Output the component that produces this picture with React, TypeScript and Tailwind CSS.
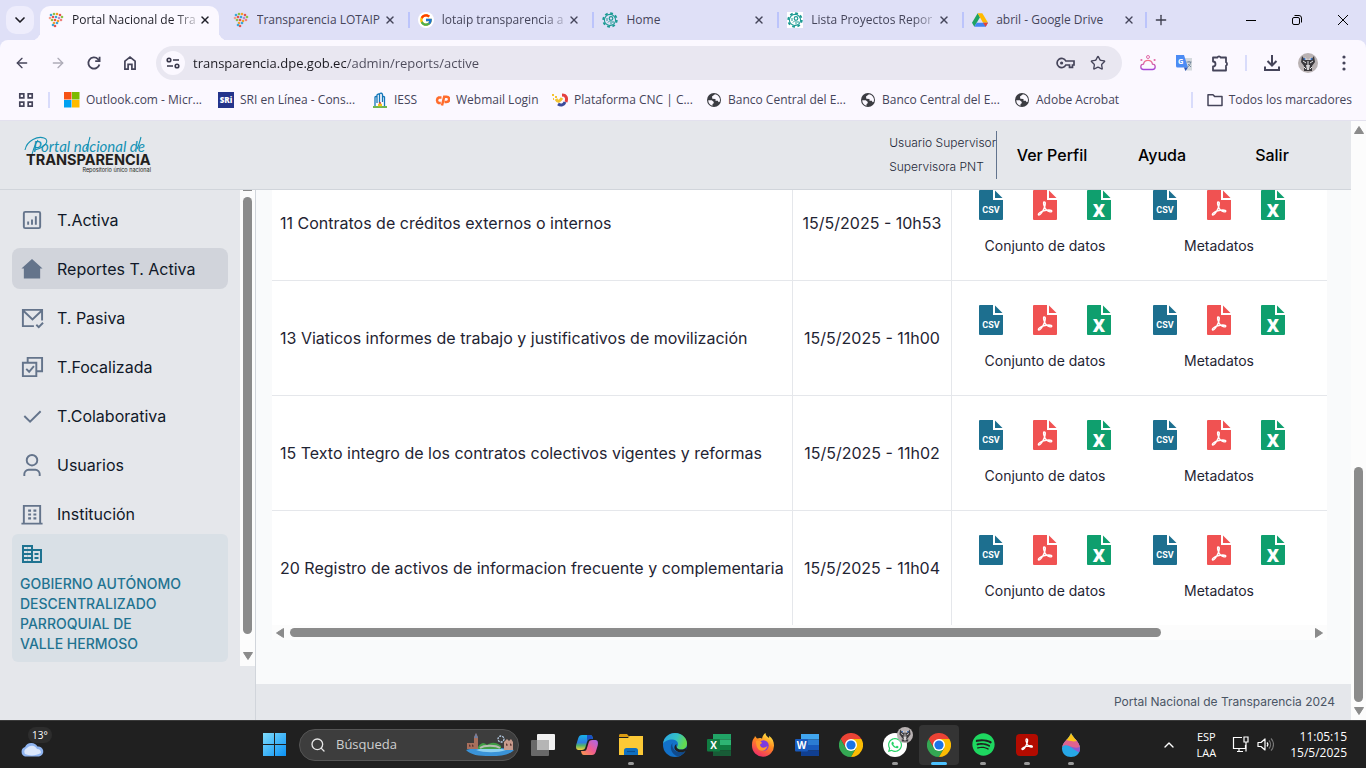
import type { ReactNode } from "react";
import { FcGoogle } from "react-icons/fc";
import { FaSpotify, FaWhatsapp } from "react-icons/fa";
import { ArrowLeft, ArrowRight, ChevronDown, ChevronUp, Plus, Search, Star, X } from "lucide-react";

/* ---------- Favicons ---------- */

const dots = [
  [3, 3, "#3ba7d8"], [6, 2, "#8bc34a"], [9, 2, "#f4a12c"], [12, 3, "#e5524f"],
  [2, 6, "#f2a08c"], [5, 5, "#e5524f"], [8, 5, "#3ba7d8"], [11, 6, "#b58bd0"], [14, 5, "#8bc34a"],
  [4, 8, "#8bc34a"], [7, 8, "#e5524f"], [10, 9, "#f4a12c"], [13, 8, "#ef7f7c"],
  [6, 11, "#f4a12c"], [9, 11, "#3ba7d8"], [7, 14, "#e5524f"], [5, 13, "#3ba7d8"],
] as const;

function MapIcon() {
  return (
    <svg viewBox="0 0 16 16" className="size-4">
      {dots.map(([x, y, fill]) => (
        <circle key={`${x}-${y}`} cx={x} cy={y} r="1.3" fill={fill} />
      ))}
    </svg>
  );
}

function GoogleIcon() {
  return (
    <span className="flex size-4 items-center justify-center rounded-full bg-white">
      <FcGoogle className="size-3.5" />
    </span>
  );
}

function GearIcon({ boxed }: { boxed?: boolean }) {
  return (
    <svg viewBox="0 0 16 16" className={boxed ? "size-4 bg-white" : "size-4"} fill="none" stroke="#1d9a94">
      <circle cx="8" cy="8" r="6.8" strokeWidth="1.8" strokeDasharray="2.8 2.54" />
      <circle cx="8" cy="8" r="5.6" strokeWidth="1.1" />
      <circle cx="9" cy="6.4" r="1.8" strokeWidth="1.2" />
      <path d="M8 8.5 6 10.5M9 8.5v4M11 9v2M5 6v3" strokeWidth="1" />
    </svg>
  );
}

function DriveIcon() {
  return (
    <svg viewBox="0 0 24 22" className="size-4">
      <path d="M8.5 1 0 15l3.5 6 8.5-14z" fill="#1ea362" />
      <path d="M8.5 1h7l8.5 14h-7.5z" fill="#ffba00" />
      <path d="M3.5 21h17l3.5-6H7z" fill="#4285f4" />
      <path d="M16.5 15H24l-3.5 6z" fill="#ea4335" />
    </svg>
  );
}

/* ---------- Browser chrome ---------- */

const tabs: { title: string; icon: ReactNode }[] = [
  { title: "Portal Nacional de Tra", icon: <MapIcon /> },
  { title: "Transparencia LOTAIP", icon: <MapIcon /> },
  { title: "lotaip transparencia a", icon: <GoogleIcon /> },
  { title: "Home", icon: <GearIcon /> },
  { title: "Lista Proyectos Repor", icon: <GearIcon boxed /> },
  { title: "abril - Google Drive", icon: <DriveIcon /> },
];

function TabStrip() {
  return (
    <div className="flex h-10 shrink-0 items-end bg-[#dfe0f7]">
      <button aria-label="Buscar pestañas" className="mb-1.5 ml-1.5 mr-1.5 flex size-7 shrink-0 items-center justify-center rounded-[10px] bg-[#eeedfc]">
        <ChevronDown className="size-4 text-[#1c1b23]" strokeWidth={2.5} />
      </button>
      <div className="flex h-[34px] w-[1107px] shrink">
        {tabs.map((tab, i) => (
          <div key={tab.title} className="relative min-w-0 flex-1 pr-1.5">
            <div
              className={`flex h-full items-center pl-2 pr-2 pb-1.5 ${
                i === 0 ? "rounded-t-[10px] bg-[#fbf8ff] text-[#1f1f28]" : "text-[#45455a]"
              }`}
            >
              <span className="mr-2 shrink-0">{tab.icon}</span>
              <span
                className={`min-w-0 flex-1 overflow-hidden whitespace-nowrap text-xs leading-4 ${
                  tab.title.length > 20 ? "[mask-image:linear-gradient(90deg,#000_80%,#0002)]" : ""
                }`}
              >
                {tab.title}
              </span>
              <button aria-label="Cerrar pestaña" className="flex w-3 shrink-0 items-center justify-center">
                <X className="size-3" strokeWidth={2.8} />
              </button>
            </div>
            {i === 0 && (
              <>
                <span className="absolute -left-2 bottom-0 size-2 rounded-br-lg shadow-[3px_3px_0_#fbf8ff]" />
                <span className="absolute -right-0.5 bottom-0 size-2 rounded-bl-lg shadow-[-3px_3px_0_#fbf8ff]" />
              </>
            )}
            {i > 1 && <span className="absolute -left-0.5 top-1.5 h-4 w-0.5 bg-[#bcc4fb]" />}
          </div>
        ))}
        <span className="-ml-1 mt-1.5 h-4 w-0.5 bg-[#bcc4fb]" />
      </div>
      <button aria-label="Nueva pestaña" className="mb-1.5 flex size-7 shrink-0 items-center justify-center">
        <Plus className="size-4 text-[#3c3c4c]" strokeWidth={2} />
      </button>
      <div className="ml-auto flex shrink-0 self-start">
        <button aria-label="Minimizar" className="flex h-10 w-[46px] items-center justify-center">
          <svg viewBox="0 0 10 10" className="size-2.5"><path d="M0 5.5h10" stroke="#000" /></svg>
        </button>
        <button aria-label="Restaurar" className="flex h-10 w-[46px] items-center justify-center">
          <svg viewBox="0 0 10 10" className="size-2.5" fill="none" stroke="#000">
            <rect x=".5" y="2.5" width="7" height="7" rx="1.5" />
            <path d="M2.5.5H7A2.5 2.5 0 0 1 9.5 3v4.5" />
          </svg>
        </button>
        <button aria-label="Cerrar" className="flex h-10 w-[46px] items-center justify-center">
          <svg viewBox="0 0 10 10" className="size-2.5"><path d="m0 0 10 10M10 0 0 10" stroke="#000" /></svg>
        </button>
      </div>
    </div>
  );
}

function ToolButton({ label, children }: { label: string; children: ReactNode }) {
  return (
    <button aria-label={label} className="flex h-[34px] w-9 shrink-0 items-center justify-center text-[#45445a]">
      {children}
    </button>
  );
}

function Avatar({ className }: { className: string }) {
  return (
    <svg viewBox="0 0 20 20" className={className}>
      <circle cx="10" cy="10" r="10" fill="#b9b2b3" />
      <path d="M4 3l3 4h6l3-4 1 6-3 4v5H6v-5L3 9z" fill="#3b393d" />
      <path d="M7 4l3 3 3-3v3H7zM8 12h4l-1 5H9z" fill="#d5d2d4" />
      <path d="M5 8l3 2M15 8l-3 2M10 8v4M6 14l2 2M14 14l-2 2" stroke="#e9e7e8" />
      <circle cx="6.5" cy="6" r="1" fill="#2f6dc4" />
      <circle cx="13.5" cy="6" r="1" fill="#2f6dc4" />
    </svg>
  );
}

function Toolbar() {
  return (
    <div className="flex h-[46px] items-center px-1">
      <ToolButton label="Atrás"><ArrowLeft className="size-4" /></ToolButton>
      <ToolButton label="Adelante"><ArrowRight className="size-4 text-[#aeacb8]" /></ToolButton>
      <ToolButton label="Recargar">
        <svg viewBox="0 0 16 16" className="size-4" fill="none" stroke="currentColor" strokeWidth="1.8">
          <path d="M13.4 9.4A5.6 5.6 0 1 1 12 4.1l1.4 1.6" />
          <path d="M13.6 1.8v4.4H9.2" />
        </svg>
      </ToolButton>
      <ToolButton label="Inicio">
        <svg viewBox="0 0 16 16" className="size-4" fill="none" stroke="currentColor" strokeWidth="1.7">
          <path d="M2.9 6.2 8 2.2l5.1 4v8H9.9V9.4H6.1v4.8H2.9z" />
        </svg>
      </ToolButton>

      <div className="ml-2 mr-2 flex h-[34px] min-w-0 flex-1 items-center rounded-full bg-[#e9e7f1] pl-[5px] pr-4">
        <span className="flex size-6 shrink-0 items-center justify-center rounded-full bg-[#fbf8ff]">
          <svg viewBox="0 0 14 12" className="h-3 w-3.5" fill="none" stroke="#38374a" strokeWidth="1.6">
            <circle cx="3" cy="3" r="1.8" />
            <circle cx="11" cy="9" r="1.8" />
            <path d="M7 3h6M1 9h6" />
          </svg>
        </span>
        <input
          aria-label="Dirección"
          defaultValue="transparencia.dpe.gob.ec/admin/reports/active"
          className="ml-2 h-6 min-w-0 flex-1 bg-[linear-gradient(90deg,#1c1b22_153px,#4c4a5a_153px)] bg-clip-text text-[13px] text-transparent outline-none"
        />
        <button aria-label="Contraseñas" className="mr-3.5">
          <svg viewBox="0 0 20 12" className="h-3 w-5 text-[#45445a]" fill="none" stroke="currentColor" strokeWidth="1.7">
            <path d="M9.8 4H18v4h-1.5v2.3h-3V8H9.8A4.6 4.6 0 1 1 9.8 4z" />
            <circle cx="5.6" cy="6" r="1.6" fill="currentColor" stroke="none" />
          </svg>
        </button>
        <button aria-label="Marcador"><Star className="size-4 text-[#45445a]" /></button>
      </div>

      <ToolButton label="Clima">
        <svg viewBox="0 0 18 18" className="size-[18px]" fill="none" strokeWidth="1.3">
          <defs>
            <linearGradient id="sky" x1="0" y1="0" x2="0" y2="1">
              <stop stopColor="#f2728c" />
              <stop offset="1" stopColor="#a345d8" />
            </linearGradient>
          </defs>
          <path d="M4.5 15.5a2.7 2.7 0 0 1 0-5.4 4.6 4.6 0 0 1 9 0 2.7 2.7 0 0 1 0 5.4z" stroke="url(#sky)" />
          <circle cx="9" cy="3" r="1.5" stroke="#e36aa8" strokeWidth="1" />
          <circle cx="2.4" cy="6" r="1.1" fill="#e36aa8" />
          <circle cx="15.6" cy="6" r="1.1" fill="#e36aa8" />
        </svg>
      </ToolButton>
      <ToolButton label="Traductor">
        <svg viewBox="0 0 16 16" className="size-4">
          <path d="M6 3h10v12.5H9z" fill="#d4d9de" />
          <path d="M0 0h8l4 12.5H1.5A1.5 1.5 0 0 1 0 11z" fill="#4b8bf4" />
          <path d="M8 12.5h4L9.5 16z" fill="#2b55b8" />
          <text x="2" y="9" fontSize="7.5" fontWeight="700" fill="#fff" fontFamily="Open Sans">G</text>
          <path d="M10.5 7h5M13 6v1M11.5 12c2-1 3-3 3-5M12 9l3 3" stroke="#6b7f95" fill="none" strokeWidth=".9" />
        </svg>
      </ToolButton>
      <ToolButton label="Extensiones">
        <svg viewBox="0 0 18 18" className="size-[18px]" fill="none" stroke="currentColor" strokeWidth="1.8">
          <path d="M2 3.5h4.3a1.9 1.9 0 0 1 3.400 0H15v4.800a1.900 1.900 0 0 1 0 3.400v4.800H2v-4a2.500 2.500 0 0 0 0-5z" strokeLinejoin="round" />
        </svg>
      </ToolButton>
      <span className="mx-[7px] h-4 w-0.5 bg-[#d9dcfb]" />
      <ToolButton label="Descargas">
        <svg viewBox="0 0 18 18" className="size-[18px]" fill="none" stroke="currentColor" strokeWidth="2">
          <path d="M9 1v10M4.500 7 9 11.500 13.500 7M2 12.500V16h14v-3.500" />
        </svg>
      </ToolButton>
      <ToolButton label="Perfil"><Avatar className="size-5" /></ToolButton>
      <ToolButton label="Menú">
        <svg viewBox="0 0 4 16" className="h-4 w-1" fill="currentColor">
          <circle cx="2" cy="2" r="1.600" /><circle cx="2" cy="8" r="1.600" /><circle cx="2" cy="14" r="1.600" />
        </svg>
      </ToolButton>
    </div>
  );
}

function GlobeIcon() {
  return (
    <svg viewBox="0 0 16 16" className="size-4">
      <circle cx="8" cy="8" r="7" fill="#3b3c42" />
      <path d="M9 2.200 6 4.400l.3 2.300 3.200.3v1.700h2.300l.8 1.500 1.300-.8A6 6 0 0 0 9 2.200zM2.200 8.300h3.600l2 1.600-.3 1.500-1 .6v1.800A6 6 0 0 1 2.200 8.300z" fill="#fbf8ff" />
    </svg>
  );
}

const bookmarks: { label: string; width: string; icon: ReactNode }[] = [
  {
    label: "Outlook.com - Micr...",
    width: "w-[154px]",
    icon: (
      <svg viewBox="0 0 16 16" className="size-4">
        <path d="M0 0h7.500v7.500H0z" fill="#f65314" /><path d="M8 0h7.500v7.500H8z" fill="#7cbb00" />
        <path d="M0 8h7.500v7.500H0z" fill="#00a1f1" /><path d="M8 8h7.500v7.500H8z" fill="#ffbb00" />
      </svg>
    ),
  },
  {
    label: "SRI en Línea - Cons...",
    width: "w-[154px]",
    icon: (
      <svg viewBox="0 0 16 16" className="size-4">
        <path d="M0 0h16v16H0z" fill="#24348b" />
        <text x="8" y="11" fontSize="8" fontWeight="800" fill="#fff" textAnchor="middle" fontFamily="Open Sans">SRi</text>
      </svg>
    ),
  },
  {
    label: "IESS",
    width: "w-[62px]",
    icon: (
      <svg viewBox="0 0 16 16" className="size-4" fill="none">
        <path d="M3 14V5a1.500 1.500 0 0 1 2 0V3a1.500 1.500 0 0 1 2.500-.5A1.500 1.500 0 0 1 10.500 3v2a1.500 1.500 0 0 1 2 0v9M5 5v6M7.500 3v8M10.500 5v5" stroke="#1277b8" strokeWidth="1.300" />
        <path d="M1 15h14" stroke="#5fae3b" strokeWidth="1.800" />
        <path d="M6 13h4" stroke="#f0c419" strokeWidth="2.500" />
        <circle cx="8" cy="11" r="1" fill="#d43b32" />
      </svg>
    ),
  },
  {
    label: "Webmail Login",
    width: "w-[118px]",
    icon: (
      <svg viewBox="0 0 16 16" className="size-4" fill="none" stroke="#ff6c2c" strokeWidth="2.500">
        <path d="M7.500 5.500H4.800a3 3 0 0 0 0 5.500h2M8 13.500l2.200-8.800h2.300a2.600 2.600 0 0 1 0 5.300h-2" />
      </svg>
    ),
  },
  {
    label: "Plataforma CNC | C...",
    width: "w-[154px]",
    icon: (
      <svg viewBox="0 0 16 16" className="size-4" fill="none" strokeWidth="3">
        <path d="M0 3h2M3 5h2M1 7h1" stroke="#f3c331" strokeWidth="2" />
        <path d="M4 7c2 4 4 2 6-1" stroke="#f3c331" />
        <path d="M10 3c5 0 5 4 4 7" stroke="#e33f3f" />
        <path d="M6 12c3 2 6 1 7-2" stroke="#3a4a9a" />
      </svg>
    ),
  },
  { label: "Banco Central del E...", width: "w-[154px]", icon: <GlobeIcon /> },
  { label: "Banco Central del E...", width: "w-[154px]", icon: <GlobeIcon /> },
  { label: "Adobe Acrobat", width: "w-[110px]", icon: <GlobeIcon /> },
];

function BookmarksBar() {
  return (
    <div className="flex h-[35px] items-start border-b border-[#e3e1ee] pl-[18px] pr-3.5 pt-1.5 text-xs leading-4 text-[#45445a]">
      <button aria-label="Aplicaciones" className="shrink-0">
        <svg viewBox="0 0 16 16" className="size-4" fill="none" stroke="#45445a" strokeWidth="1.700">
          <path d="M1.800 1.800h4v4h-4zM10.200 1.800h4v4h-4zM1.800 10.200h4v4h-4zM10.200 10.200h4v4h-4z" />
        </svg>
      </button>
      <span className="ml-3.5 mr-3.5 h-4 w-0.5 shrink-0 bg-[#d9dcfb]" />
      {bookmarks.map((b, i) => (
        <a key={i} href="#" className={`flex shrink-0 gap-1.5 whitespace-nowrap ${b.width}`}>
          <span className="shrink-0">{b.icon}</span>
          {b.label}
        </a>
      ))}
      <span className="ml-auto h-4 w-0.5 bg-[#d9dcfb]" />
      <button className="ml-3.5 flex shrink-0 gap-1.5 whitespace-nowrap">
        <svg viewBox="0 0 16 16" className="size-4" fill="none" stroke="#45445a" strokeWidth="1.500">
          <path d="M1 2.800h5l1.800 1.800H15v9H1z" strokeLinejoin="round" />
        </svg>
        Todos los marcadores
      </button>
    </div>
  );
}

/* ---------- Portal ---------- */

function Triangle({ className }: { className: string }) {
  return (
    <svg viewBox="0 0 10 8" className={`h-2 w-2.5 shrink-0 ${className}`} fill="#8b8b8b">
      <path d="M5 .5 9.500 7.500H.5z" stroke="#8b8b8b" strokeLinejoin="round" />
    </svg>
  );
}

function Logo() {
  return (
    <svg viewBox="0 0 130 40" className="h-10 w-[130px]" role="img" aria-label="Portal nacional de Transparencia">
      <text x="9" y="17" fontSize="15" fontStyle="italic" fontWeight="400" fontFamily="Lato" fill="#1592b4">Portal nacional de</text>
      <path d="M6 28C8 18 11 9 14 5M1 15C3 5 14 1 20 3c6 2 2 9-9 12M62 14c2-3 3-8 4-12M113 14c2-4 3-8 4-12" stroke="#1592b4" fill="none" strokeWidth="1.100" />
      <text x="2" y="30" fontSize="14.500" fontWeight="700" fontFamily="Inter" fill="#231f20">TRANSPARENCIA</text>
      <text x="127" y="37" fontSize="5.500" fontFamily="Inter" fill="#231f20" textAnchor="end">Repositorio único nacional</text>
    </svg>
  );
}

function PortalHeader() {
  return (
    <header className="flex h-[69px] shrink-0 items-center border-b border-[#d1d5db] bg-gray-200 pl-6 pr-6">
      <Logo />
      <div className="ml-auto flex h-12 flex-col border-r border-slate-500 text-xs font-light leading-6 text-gray-800">
        <span className="leading-6">Usuario Supervisor</span>
        <span className="leading-6">Supervisora PNT</span>
      </div>
      <nav className="flex font-medium text-black">
        <a href="#" className="w-[110px] text-center">Ver Perfil</a>
        <a href="#" className="w-[110px] text-center">Ayuda</a>
        <a href="#" className="w-[110px] text-center">Salir</a>
      </nav>
    </header>
  );
}

const navItems: { label: string; icon: ReactNode }[] = [
  {
    label: "T.Activa",
    icon: (
      <>
        <rect x="4" y="4" width="17" height="17" rx="1.500" />
        <path d="M8.500 14v3.500M12.500 12v5.500M16.500 8.500v9" />
      </>
    ),
  },
  { label: "Reportes T. Activa", icon: <path d="M12.500 2 23.500 12H21v10.500H4V12H1.500z" fill="currentColor" stroke="none" /> },
  {
    label: "T. Pasiva",
    icon: <path d="M14.500 21H3V4h20v11M3.500 5l9.500 9 9.500-9M17 19.500l2.500 2.500 4.500-4.500" />,
  },
  {
    label: "T.Focalizada",
    icon: <path d="M3 8h14v14H3zM8 8V3h15v14h-6M6.500 14.500 9.500 17.500l5-6" />,
  },
  { label: "T.Colaborativa", icon: <path d="m4.500 12.500 6 6L21.500 7.500" /> },
  {
    label: "Usuarios",
    icon: (
      <>
        <circle cx="12.500" cy="7.500" r="5.500" />
        <path d="M4.500 24v-2a4.500 4.500 0 0 1 4.500-4.500h7a4.500 4.500 0 0 1 4.500 4.500v2" />
      </>
    ),
  },
  {
    label: "Institución",
    icon: (
      <>
        <path d="M4 22.500V4h17v18.500M1.500 22.500h22" />
        <path d="M8.500 9h3M14 9h3M8.500 13h3M14 13h3M8.500 17h3M14 17h3" strokeWidth="2.200" />
      </>
    ),
  },
];

function Sidebar() {
  return (
    <aside className="w-64 shrink-0 border-r border-[#d1d5db] bg-gray-200">
      <div className="flex">
        <nav className="flex-1 px-3 pb-1 pt-[9px]">
          <ul className="flex flex-col gap-2">
            {navItems.map((item) => (
              <li key={item.label}>
                <a
                  href="#"
                  className={`flex h-[41px] items-center gap-[13px] rounded-lg px-2 text-gray-900 ${
                    item.label === "Reportes T. Activa" ? "bg-[#d1d4db]" : ""
                  }`}
                >
                  <svg viewBox="0 0 25 25" className="size-6 text-[#64748b]" fill="none" stroke="currentColor" strokeWidth="2">
                    {item.icon}
                  </svg>
                  {item.label}
                </a>
              </li>
            ))}
          </ul>
          <div className="rounded-md bg-[#d9e0e6] p-2 text-sm font-medium text-[#1f7391]">
            <svg viewBox="0 0 24 24" className="mb-2 size-6" fill="none" stroke="currentColor" strokeWidth="2">
              <path d="M3 4h9v4h9v12H3zM12 8v12M3 8h9M3 12h9M3 16h9M14.500 12h4M14.500 16h4" />
              <path d="M7.500 4v16" strokeWidth="1" strokeOpacity=".25" />
            </svg>
            GOBIERNO AUTÓNOMO
            <br />
            DESCENTRALIZADO
            <br />
            PARROQUIAL DE
            <br />
            VALLE HERMOSO
          </div>
        </nav>
        <div className="flex w-[15px] flex-col items-center bg-[#fcfcfc]">
          <span className="h-px w-[9px] bg-[#8b8b8b]" />
          <span className="mb-3 mt-1.5 w-[9px] flex-1 rounded-full bg-[#8b8b8b]" />
          <span className="flex h-5 items-center"><Triangle className="rotate-180" /></span>
        </div>
      </div>
    </aside>
  );
}

const sheet = "M1 0h13v10h10v19a1 1 0 0 1-1 1H1a1 1 0 0 1-1-1V1a1 1 0 0 1 1-1z";

function FileIcon({ kind }: { kind: "csv" | "pdf" | "xls" }) {
  const fill = { csv: "#1d6f8f", pdf: "#f05252", xls: "#0f9f6e" }[kind];
  return (
    <svg viewBox="0 0 24 30" className="h-[30px] w-6">
      <path d={sheet} fill={fill} />
      <path d="M16 0.500V8h7.500z" fill={fill} />
      {kind === "csv" && (
        <text x="12" y="22.500" fontSize="9" fontWeight="700" textAnchor="middle" fill="#fff" fontFamily="Roboto">CSV</text>
      )}
      {kind === "xls" && (
        <text x="12" y="26.500" fontSize="17" fontWeight="800" textAnchor="middle" fill="#fff" fontFamily="Open Sans">X</text>
      )}
      {kind === "pdf" && (
        <path
          d="M11 12c1.800-.4 1.600 2.500.2 6-1.300 3.300-4 7.500-5.400 7-1.600-.8 1.500-3.300 5-4.200 3.300-.9 7.800-1.200 8 .3.100 1.400-3.200.9-5.300-1C11.300 18 9.800 12.300 11 12z"
          fill="none"
          stroke="#fff"
          strokeWidth="1.400"
        />
      )}
    </svg>
  );
}

function Downloads({ title }: { title: string }) {
  return (
    <div className="flex w-[174px] flex-col items-center gap-4">
      <div className="flex">
        {(["csv", "pdf", "xls"] as const).map((kind) => (
          <button key={kind} aria-label={`${title} ${kind}`} className="flex w-[54px] justify-center">
            <FileIcon kind={kind} />
          </button>
        ))}
      </div>
      <span className="text-sm">{title}</span>
    </div>
  );
}

const reports = [
  { name: "11 Contratos de créditos externos o internos", date: "15/5/2025 - 10h53" },
  { name: "13 Viaticos informes de trabajo y justificativos de movilización", date: "15/5/2025 - 11h00" },
  { name: "15 Texto integro de los contratos colectivos vigentes y reformas", date: "15/5/2025 - 11h02" },
  { name: "20 Registro de activos de informacion frecuente y complementaria", date: "15/5/2025 - 11h04" },
];

function Reports() {
  return (
    <main className="flex min-h-0 min-w-0 flex-1 flex-col bg-[#f9fafb]">
      <div className="ml-4 mr-6 flex min-h-0 flex-1 flex-col justify-end overflow-hidden bg-white">
        <table className="w-full border-separate border-spacing-0 text-[#1f2433]">
          <tbody>
            {reports.map((r) => (
              <tr key={r.name} className="group h-[115px] last:h-[114px]">
                <td className="w-[521px] whitespace-nowrap border-b border-r border-gray-200 px-2 group-last:border-b-0">{r.name}</td>
                <td className="w-[159px] whitespace-nowrap border-b border-r border-gray-200 text-center group-last:border-b-0">{r.date}</td>
                <td className="border-b border-gray-200 pl-1.5 group-last:border-b-0">
                  <div className="flex">
                    <Downloads title="Conjunto de datos" />
                    <Downloads title="Metadatos" />
                  </div>
                </td>
              </tr>
            ))}
          </tbody>
        </table>
      </div>
      <div className="ml-4 mr-6 flex h-[15px] shrink-0 items-center bg-[#fcfcfc] px-[3px]">
        <Triangle className="-rotate-90" />
        <span className="ml-[5px] h-[9px] w-[83%] rounded-full bg-[#8b8b8b]" />
        <Triangle className="ml-auto rotate-90" />
      </div>
      <footer className="mt-11 flex h-9 shrink-0 items-center justify-end bg-gray-200 pr-4 text-xs text-gray-600">
        Portal Nacional de Transparencia 2024
      </footer>
    </main>
  );
}

/* ---------- Taskbar ---------- */

function ChromeIcon() {
  return (
    <svg viewBox="0 0 24 24" className="size-6">
      <path d="M12 6h10.400A12 12 0 0 0 1.600 6l5.200 9z" fill="#ea4335" />
      <path d="M1.600 6A12 12 0 0 0 12 24l5.200-9H6.800z" fill="#34a853" />
      <path d="M22.400 6H12l5.200 9L12 24A12 12 0 0 0 22.400 6z" fill="#fbbc04" />
      <circle cx="12" cy="12" r="6" fill="#fff" />
      <circle cx="12" cy="12" r="4.600" fill="#1a73e8" />
    </svg>
  );
}

function OfficeIcon({ letter, tones }: { letter: string; tones: string[] }) {
  return (
    <svg viewBox="0 0 24 24" className="size-6">
      <path d="M6 1h18v5.500H6z" fill={tones[0]} />
      <path d="M6 6.500h18V12H6z" fill={tones[1]} />
      <path d="M6 12h18v5.500H6z" fill={tones[2]} />
      <path d="M6 17.500h18V23H6z" fill={tones[3]} />
      <rect y="6" width="13" height="12.500" rx="1" fill={tones[4]} />
      <text x="6.500" y="16" fontSize="10" fontWeight="700" textAnchor="middle" fill="#fff" fontFamily="Open Sans">{letter}</text>
    </svg>
  );
}

const apps: { name: string; icon: ReactNode; running?: boolean; active?: boolean }[] = [
  {
    name: "Vista de tareas",
    icon: (
      <svg viewBox="0 0 24 24" className="size-6">
        <rect x="6" y="1" width="18" height="16" rx="1" fill="#f1f1f1" />
        <rect y="7" width="18" height="16" rx="1" fill="#777" fillOpacity=".85" />
        <path d="M6 7h12v10H6z" fill="#b5b5b5" />
      </svg>
    ),
  },
  {
    name: "Copilot",
    icon: (
      <svg viewBox="0 0 24 24" className="size-6">
        <defs>
          <linearGradient id="cp1" x1="0" y1="0" x2="0" y2="1">
            <stop stopColor="#16b1e8" /><stop offset=".5" stopColor="#2f7de0" /><stop offset=".7" stopColor="#52b36b" /><stop offset="1" stopColor="#f4d03c" />
          </linearGradient>
          <linearGradient id="cp2" x1="1" y1="0" x2="0" y2="1">
            <stop stopColor="#a568ee" /><stop offset=".5" stopColor="#ee5b93" /><stop offset="1" stopColor="#fb9b45" />
          </linearGradient>
        </defs>
        <path d="M7 2h8c2 0 2.500 1.500 3 4h-3c-2 0-2.500 1-3 3l-1.500 5c-.5 2-1.500 3-4 3H3.500C1 17 .6 14 1.300 11.500l2-6.500C4 3 5 2 7 2z" fill="url(#cp1)" />
        <path d="M17 22H9c-2 0-2.500-1.500-3-4h3c2 0 2.500-1 3-3l1.500-5c.5-2 1.500-3 4-3h3c2.500 0 2.900 3 2.200 5.500l-2 6.500c-.7 2-1.700 3-3.700 3z" fill="url(#cp2)" />
        <path d="M12 2h3c2 0 2.500 1.500 3 4h-3c-2 0-2.500 1-3 3z" fill="#1c4fc4" />
      </svg>
    ),
  },
  {
    name: "Explorador",
    running: true,
    icon: (
      <svg viewBox="0 0 24 24" className="size-6">
        <path d="M0 2.500C0 1.600.6 1 1.500 1H8l2.500 3H0z" fill="#d99a12" />
        <path d="M0 5h9l1.500-2H24v19H0z" fill="#fcc936" />
        <path d="M5 22v-4.500A2.500 2.500 0 0 1 7.500 15h9a2.500 2.500 0 0 1 2.500 2.500V22z" fill="#0f6fc0" />
        <path d="M8 18.500h8" stroke="#0a4f91" strokeWidth="1.200" />
      </svg>
    ),
  },
  {
    name: "Edge",
    icon: (
      <svg viewBox="0 0 24 24" className="size-6">
        <defs>
          <linearGradient id="edge" x1="0" y1="0" x2="1" y2=".3">
            <stop stopColor="#2aa5e8" /><stop offset=".6" stopColor="#35c1c4" /><stop offset="1" stopColor="#63d94f" />
          </linearGradient>
        </defs>
        <circle cx="12" cy="12" r="12" fill="#1271c9" />
        <path d="M0 11C.8 4 6 0 12 0c7.500 0 12 5.500 12 10.500 0 4-3 6-6 6-3.500 0-5-1.500-3.500-3.500 1.500-2.500-.5-6.500-5-6.500C5 6.500 1 8.500 0 11z" fill="url(#edge)" />
        <path d="M9.500 10c-3.500 3.500-1.500 11.500 5.500 13.500 3-.8 5.500-2.500 7.500-5.500-2.500 1.500-5 1.800-7.500 1-4-1.200-6.500-5-5.500-9z" fill="#114a8b" />
        <path d="M22.800 18c-3.800 2-7.300 1.300-9.300 0-2.500-1.700-3-5 0-7-.6 3 .5 5.500 4.500 5.500 2.500 0 4-.5 6-2.500z" fill="#202020" />
      </svg>
    ),
  },
  { name: "Excel", icon: <OfficeIcon letter="X" tones={["#21a366", "#2eb573", "#107c41", "#185c37", "#107c41"]} /> },
  {
    name: "Firefox",
    icon: (
      <svg viewBox="0 0 24 24" className="size-6">
        <defs>
          <linearGradient id="fox" x1=".8" y1="0" x2=".3" y2="1">
            <stop stopColor="#fff04a" /><stop offset=".45" stopColor="#ff8a1f" /><stop offset="1" stopColor="#f02a6a" />
          </linearGradient>
        </defs>
        <path d="M14.500 0c0 2.500 2 3.500 3.500 5 .3-.7.2-1.500 0-2.200 3.500 2.200 5 6 5 9.700a11 11 0 0 1-22 .5C.8 8 2 6 3.500 4.500L4 3l2 2.500c3-1 4.500-.5 5 .2C11.500 3.500 12.500 1 14.500 0z" fill="url(#fox)" />
        <circle cx="12.500" cy="12.500" r="5.200" fill="#7b3be0" />
        <path d="M5 8c2.500-1 5 0 6 2l-2 1.500c0 3 3.500 4.500 7.500 1.500-1 4-4 5.500-7 4.500C6 16.500 5 12 5 8z" fill="#ff9a2a" />
      </svg>
    ),
  },
  { name: "Word", icon: <OfficeIcon letter="W" tones={["#41a5ee", "#2b7cd3", "#185abd", "#103f91", "#185abd"]} /> },
  { name: "Chrome", icon: <ChromeIcon /> },
  {
    name: "WhatsApp",
    running: true,
    icon: (
      <span className="relative flex size-6 items-center justify-center rounded-full bg-white">
        <FaWhatsapp className="size-4 text-[#25d366]" />
        <Avatar className="absolute -right-1.5 -top-1.5 size-4" />
      </span>
    ),
  },
  { name: "Chrome", icon: <ChromeIcon />, active: true },
  { name: "Spotify", icon: <FaSpotify className="size-[23px] text-[#1ed760]" />, running: true },
  {
    name: "Acrobat",
    running: true,
    icon: (
      <svg viewBox="0 0 22 22" className="size-[22px]">
        <rect width="22" height="22" rx="4" fill="#b30b00" />
        <path d="M10.500 5c1.500-.3 1.400 2 .3 4.800C9.700 12.500 7.500 16 6.200 15.500c-1.200-.6 1.300-2.500 4-3.200 2.600-.8 6-1 6.200.2.100 1-2.400.8-4-.8-1.900-1.700-3.100-6.400-1.900-6.700z" fill="none" stroke="#fff" strokeWidth="1.300" />
      </svg>
    ),
  },
  {
    name: "Paint 3D",
    running: true,
    icon: (
      <svg viewBox="0 0 18 24" className="h-6 w-[18px]">
        <defs>
          <clipPath id="drop"><path d="M9 0c2 5 9 9 9 15.500C18 20.500 14 24 9 24s-9-3.500-9-8.500C0 9 8 5 9 0z" /></clipPath>
        </defs>
        <g clipPath="url(#drop)">
          <path d="M0 0h18v24H0z" fill="#27a7e7" />
          <path d="M0 12c6-2 10 4 18 8V8L9 4z" fill="#8d5ad0" />
          <path d="M0 14c5-5 10 3 18 0V6H0z" fill="#e0628f" />
          <path d="M0 8c5-3 9 3 18-1V0H0z" fill="#fcc419" />
        </g>
      </svg>
    ),
  },
];

function Taskbar() {
  return (
    <div className="flex h-12 shrink-0 items-center border-t border-[#3a3a3a] bg-[#202020] font-['Open_Sans',sans-serif] text-white">
      <button aria-label="Clima" className="relative ml-5 h-8 w-8">
        <svg viewBox="0 0 24 16" className="mt-2 h-4 w-6">
          <path d="M5 15.500a5 5 0 0 1 0-9.500 7 7 0 0 1 12.500-.5A5 5 0 0 1 19 15.500z" fill="#8fb4f0" />
          <path d="M5 13a4 4 0 0 1 2-6 6 6 0 0 1 10 1 4 4 0 0 1 4 4c-5 3-12 3-16 1z" fill="#dbe7fb" />
        </svg>
        <span className="absolute -top-0.5 left-2 rounded-full bg-[#2d2d2d] px-1 text-[10px] leading-4">13°</span>
      </button>

      <button aria-label="Inicio" className="ml-[200px] flex size-11 shrink-0 items-center justify-center">
        <svg viewBox="0 0 23 23" className="size-[23px]">
          <defs>
            <linearGradient id="win" x1="0" y1="0" x2="1" y2="1"><stop stopColor="#7fdcfb" /><stop offset="1" stopColor="#0a91f5" /></linearGradient>
          </defs>
          <path d="M0 0h11v11H0zM12 0h11v11H12zM0 12h11v11H0zM12 12h11v11H12z" fill="url(#win)" />
        </svg>
      </button>

      <label className="ml-[3px] mr-0.5 flex h-8 w-[220px] shrink-0 items-center rounded-full border border-[#555] bg-[#3d3d3d] pl-2.5 pr-1">
        <Search className="size-4 shrink-0 text-[#e6e6e6]" />
        <input aria-label="Búsqueda" placeholder="Búsqueda" className="ml-2.5 w-0 min-w-0 flex-1 text-[13px] placeholder-[#cfcfcf] outline-none" />
        <svg viewBox="0 0 48 24" className="h-6 w-12 shrink-0">
          <path d="M0 17c8-3 40-3 48 0-5 5-12 6-24 6S5 22 0 17z" fill="#3a93d8" />
          <path d="M10 17c6-2 24-2 30 0-8 3-22 3-30 0z" fill="#8ed0f0" />
          <path d="M12 14c4-6 7-4 9-2 3-2 8-4 14 1v3H12z" fill="#3f9e44" />
          <path d="M14 15c4-3 16-3 20 0" stroke="#b7bcb5" strokeWidth="2" fill="none" />
          <path d="M1 10h7V4l2-4 2 4v12H1z" fill="#a86f5c" />
          <path d="M8 5l2-5 2 5z" fill="#6d7fa3" />
          <path d="M38 9l3-3 2 2 2-2 2 3v8H38z" fill="#c79a8c" />
          <circle cx="35" cy="6" r="3" fill="none" stroke="#b9cfe8" strokeWidth="1.300" strokeDasharray="2 1" />
          <path d="M3 12h1v2M6 12h1v2M40 11h1v2M44 11h1v2" stroke="#6b3f38" />
        </svg>
      </label>

      {apps.map((app, i) => (
        <button key={i} aria-label={app.name} className="flex h-11 w-11 shrink-0 items-center justify-center">
          <span className={`relative flex h-10 w-10 items-center justify-center rounded ${app.active ? "bg-[#343434]" : ""}`}>
            {app.icon}
            {app.running && <span className="absolute bottom-0 h-[3px] w-1.5 rounded-full bg-[#9a9a9a]" />}
            {app.active && <span className="absolute bottom-0 h-[3px] w-4 rounded-full bg-[#4cc2ff]" />}
          </span>
        </button>
      ))}

      <div className="ml-auto flex shrink-0 items-center pr-[19px] text-xs leading-4">
        <button aria-label="Iconos ocultos" className="mr-5"><ChevronUp className="size-4" /></button>
        <button className="mr-4 text-center text-[11px] leading-4">ESP<br />LAA</button>
        <button aria-label="Red y volumen" className="mr-4 flex gap-2">
          <svg viewBox="0 0 17 17" className="size-[17px]" fill="none" stroke="#fff" strokeWidth="1.200">
            <path d="M10 1.500H1.500v11h12V9M5 15.500h6M7 12.500v3" />
            <path d="M12 1h4v5h-4zM14 6v9.500" />
          </svg>
          <svg viewBox="0 0 17 17" className="size-[17px]" fill="none" stroke="#fff" strokeWidth="1.200">
            <path d="M1 6.500h3L8 3v11l-4-3.500H1z" strokeLinejoin="round" />
            <path d="M10 6.500a3 3 0 0 1 0 4" />
            <path d="M12 4.500a6 6 0 0 1 0 8M14 2.500a8.500 8.500 0 0 1 0 12" stroke="#777" />
          </svg>
        </button>
        <button className="text-right">11:05:15<br />15/5/2025</button>
      </div>
    </div>
  );
}

export default function App() {
  return (
    <div className="flex h-screen flex-col overflow-hidden bg-[#dfe0f7]">
      <div className="shrink-0 font-['Open_Sans',sans-serif]">
        <TabStrip />
        <div className="rounded-t-lg bg-[#fbf8ff]">
          <Toolbar />
          <BookmarksBar />
        </div>
      </div>

      <div className="flex min-h-0 flex-1 bg-white font-['Inter',sans-serif]">
        <div className="flex min-w-0 flex-1 flex-col">
          <PortalHeader />
          <div className="flex min-h-0 flex-1">
            <Sidebar />
            <Reports />
          </div>
        </div>
        <div className="flex w-[15px] shrink-0 flex-col items-center bg-[#fcfcfc]">
          <span className="flex h-[18px] items-center"><Triangle className="" /></span>
          <span className="mt-auto h-[235px] w-[9px] rounded-full bg-[#8b8b8b]" />
          <span className="flex h-[18px] items-center"><Triangle className="rotate-180" /></span>
        </div>
      </div>

      <Taskbar />
    </div>
  );
}
